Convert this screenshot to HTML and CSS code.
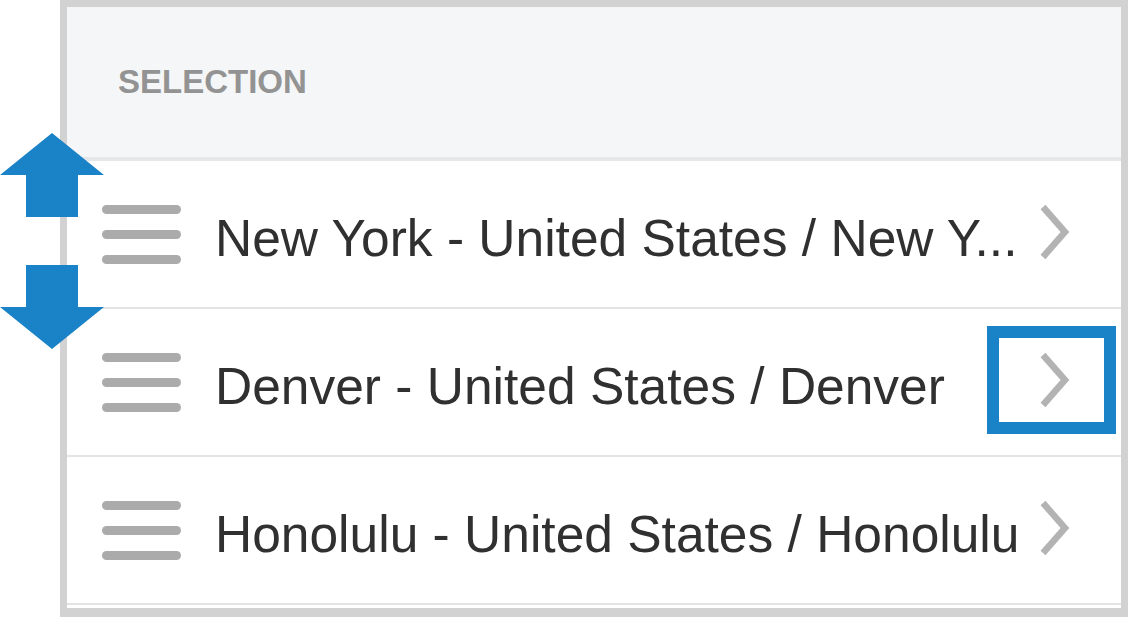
FILE: index.html
```html
<!DOCTYPE html>
<html lang="en">
<head>
<meta charset="utf-8">
<title>Selection</title>
<link rel="stylesheet" href="styles.css">
</head>
<body>
<div class="stage">
  <section class="panel">
    <header class="panel-header">
      <h2 class="panel-title">SELECTION</h2>
    </header>
    <ul class="list">
      <li class="row">
        <svg class="handle" viewBox="0 0 79 59" width="79" height="59" aria-hidden="true">
          <rect x="0" y="0" width="79" height="9" rx="4.5"/>
          <rect x="0" y="25" width="79" height="9" rx="4.5"/>
          <rect x="0" y="50" width="79" height="9" rx="4.5"/>
        </svg>
        <span class="label">New York - United States / New Y...</span>
        <svg class="chevron" viewBox="0 0 32 56" width="32" height="56" aria-hidden="true">
          <polyline points="3,3 25,28 3,53"/>
        </svg>
      </li>
      <li class="row">
        <svg class="handle" viewBox="0 0 79 59" width="79" height="59" aria-hidden="true">
          <rect x="0" y="0" width="79" height="9" rx="4.5"/>
          <rect x="0" y="25" width="79" height="9" rx="4.5"/>
          <rect x="0" y="50" width="79" height="9" rx="4.5"/>
        </svg>
        <span class="label">Denver - United States / Denver</span>
        <svg class="chevron" viewBox="0 0 32 56" width="32" height="56" aria-hidden="true">
          <polyline points="3,3 25,28 3,53"/>
        </svg>
        <span class="highlight" aria-hidden="true"></span>
      </li>
      <li class="row">
        <svg class="handle" viewBox="0 0 79 59" width="79" height="59" aria-hidden="true">
          <rect x="0" y="0" width="79" height="9" rx="4.5"/>
          <rect x="0" y="25" width="79" height="9" rx="4.5"/>
          <rect x="0" y="50" width="79" height="9" rx="4.5"/>
        </svg>
        <span class="label">Honolulu - United States / Honolulu</span>
        <svg class="chevron" viewBox="0 0 32 56" width="32" height="56" aria-hidden="true">
          <polyline points="3,3 25,28 3,53"/>
        </svg>
      </li>
    </ul>
  </section>
  <svg class="move-arrows" viewBox="0 0 104 216" width="104" height="216" aria-hidden="true">
    <polygon points="52,0 104,42 78,42 78,84 26,84 26,42 0,42"/>
    <polygon points="26,132 78,132 78,174 104,174 52,216 0,174 26,174"/>
  </svg>
</div>
</body>
</html>
```

FILE: styles.css
```css
* {
  box-sizing: border-box;
}

html,
body {
  margin: 0;
  padding: 0;
  background: #ffffff;
}

body {
  font-family: "Liberation Sans", Arial, sans-serif;
  overflow: hidden;
}

.stage {
  position: relative;
  width: 1130px;
  height: 617px;
  padding-left: 60px;
}

.panel {
  width: 1068px;
  border: 7px solid #d2d2d2;
  border-bottom-width: 9px;
  padding-bottom: 3px;
  background: #ffffff;
}

.panel-header {
  height: 154px;
  display: flex;
  align-items: center;
  padding-left: 51px;
  background: #f5f6f7;
  border-bottom: 4px solid #e6e7e8;
}

.panel-title {
  margin: 0;
  font-size: 33px;
  line-height: normal;
  font-weight: 700;
  color: #939393;
}

.list {
  list-style: none;
  margin: 0;
  padding: 0;
}

.row {
  position: relative;
  height: 148px;
  display: flex;
  align-items: center;
  padding-left: 35px;
  padding-right: 49px;
  border-bottom: 2px solid #e4e4e4;
}

.handle {
  flex: none;
  fill: #ababab;
}

.label {
  flex: 1;
  min-width: 0;
  margin-left: 34px;
  padding-top: 8px;
  font-size: 51.5px;
  line-height: normal;
  color: #303030;
  white-space: nowrap;
}

.chevron {
  flex: none;
  margin-left: 6px;
  margin-bottom: 4px;
  fill: none;
  stroke: #b3b3b3;
  stroke-width: 6.5;
  stroke-linejoin: miter;
  stroke-linecap: butt;
}

.highlight {
  position: absolute;
  left: 920px;
  top: 17px;
  width: 129px;
  height: 108px;
  border: 12px solid #1a82c7;
}

.move-arrows {
  position: absolute;
  left: 0;
  top: 133px;
  fill: #1a82c7;
}
```
